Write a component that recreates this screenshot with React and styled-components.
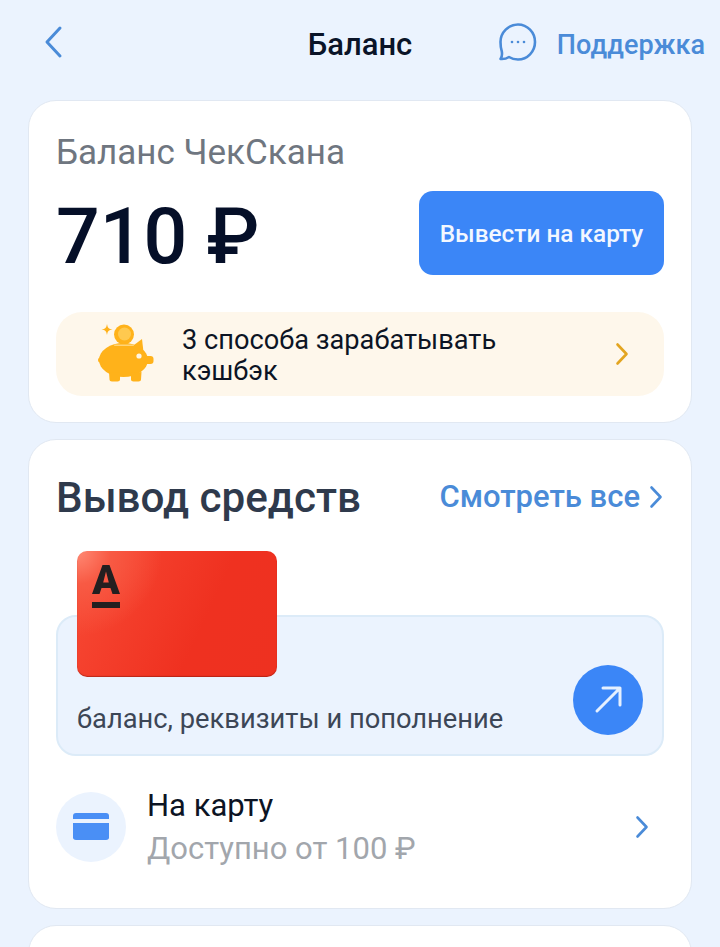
import styled, { createGlobalStyle } from "styled-components";

const GlobalStyle = createGlobalStyle`
  html, body {
    margin: 0;
    padding: 0;
    background: #ebf3fe;
    font-family: "Roboto", "Liberation Sans", sans-serif;
    overflow: hidden;
  }
  * { box-sizing: border-box; }
`;

function BackIcon() {
  return (
    <svg width="20" height="34" viewBox="0 0 20 34" fill="none">
      <path d="M16 3 L3 17 L16 31" stroke="#4a8bd8" strokeWidth="3" strokeLinecap="round" strokeLinejoin="round" />
    </svg>
  );
}

function ChatIcon() {
  return (
    <svg width="40" height="40" viewBox="0 0 40 40" fill="none">
      <path
        d="M20 2.5 C29.5 2.5 37 10.5 37 20 C37 29.5 29.5 37.5 20 37.5 C16.5 37.5 13.5 36.6 11 35 C8.5 36.6 5.5 37.3 2.5 37 C4 35 4.3 32.5 3.8 29.5 C3 27 2.5 23.5 2.5 20 C2.5 10.5 10.5 2.5 20 2.5 Z"
        stroke="#4a8bd8"
        strokeWidth="2.6"
        strokeLinejoin="round"
      />
      <circle cx="14" cy="20" r="1.3" fill="#4a8bd8" />
      <circle cx="20" cy="20" r="1.3" fill="#4a8bd8" />
      <circle cx="26" cy="20" r="1.3" fill="#4a8bd8" />
    </svg>
  );
}

function Chevron({ color }) {
  return (
    <svg width="14" height="24" viewBox="0 0 14 24" fill="none">
      <path d="M2.5 2.5 L11.5 12 L2.5 21.5" stroke={color} strokeWidth="2.6" strokeLinecap="round" strokeLinejoin="round" />
    </svg>
  );
}

function PiggyIcon() {
  return (
    <svg width="56" height="58" viewBox="0 0 56 58" fill="none">
      <path d="M9 0 C9.7 4 10.5 4.8 14.5 5.5 C10.5 6.2 9.7 7 9 11 C8.3 7 7.5 6.2 3.5 5.5 C7.5 4.8 8.3 4 9 0 Z" fill="#ffb21a" />
      <circle cx="26" cy="10.5" r="10" fill="#ffb21a" />
      <circle cx="26.5" cy="10" r="6.5" fill="#ffc94f" />
      <ellipse cx="25.5" cy="36" rx="24.5" ry="17" fill="#ffb21a" />
      <path d="M36 21 L44 15 L45.5 28 Z" fill="#ffb21a" />
      <rect x="46" y="32" width="9.5" height="8" rx="3" fill="#ffb21a" />
      <circle cx="2.5" cy="36" r="2.5" fill="#ffb21a" />
      <path d="M11 48 L22 49 L22 55.5 C22 56.8 21 57.5 19.5 57.5 L14 57.5 C12.5 57.5 11.5 56.8 11.5 55.5 Z" fill="#ffb21a" />
      <path d="M33 49 L43.5 48 L43 55.5 C43 56.8 42 57.5 40.5 57.5 L35.5 57.5 C34 57.5 33 56.8 33 55.5 Z" fill="#ffb21a" />
      <rect x="16" y="20.4" width="20" height="1.6" rx="0.8" fill="#ffd478" />
      <circle cx="41" cy="32" r="2.6" fill="#fff6e4" />
    </svg>
  );
}

function AlfaLogo() {
  return (
    <CardLogo viewBox="0 0 28 43" fill="none">
      <path
        d="M10.5 0 L17.5 0 L28 29 L20.5 29 L18.5 23 L9.5 23 L7.5 29 L0 29 Z M14 6.5 L11.2 17.5 L16.8 17.5 Z"
        fill="#231f20"
        fillRule="evenodd"
      />
      <rect x="0" y="37" width="28" height="6" fill="#231f20" />
    </CardLogo>
  );
}

function ArrowIcon() {
  return (
    <svg width="30" height="30" viewBox="0 0 30 30" fill="none">
      <path d="M4 26 L27 3 M10 3 L27 3 L27 20" stroke="#e5f0ff" strokeWidth="3" strokeLinecap="round" strokeLinejoin="round" />
    </svg>
  );
}

function BankCardIcon() {
  return (
    <svg width="36" height="27" viewBox="0 0 36 27" fill="none">
      <path d="M0 6 L0 3 C0 1 1 0 3 0 L33 0 C35 0 36 1 36 3 L36 6 Z" fill="#4a8ff5" />
      <path d="M0 10 L36 10 L36 24.5 C36 26 35 27 33 27 L3 27 C1 27 0 26 0 24.5 Z" fill="#4a8ff5" />
    </svg>
  );
}

export default function App() {
  return (
    <>
      <GlobalStyle />
      <Page>
        <Header>
          <BackButton>
            <BackIcon />
          </BackButton>
          <HeaderTitle>Баланс</HeaderTitle>
          <Support>
            <ChatIcon />
            <SupportText>Поддержка</SupportText>
          </Support>
        </Header>

        <BalanceCard>
          <BalanceLabel>Баланс ЧекСкана</BalanceLabel>
          <BalanceRow>
            <Amount>710 ₽</Amount>
            <WithdrawButton>Вывести на карту</WithdrawButton>
          </BalanceRow>
          <Promo>
            <PromoIcon>
              <PiggyIcon />
            </PromoIcon>
            <PromoText>3 способа зарабатывать кэшбэк</PromoText>
            <Chevron color="#e3a520" />
          </Promo>
        </BalanceCard>

        <WithdrawCard>
          <SectionHead>
            <SectionTitle>Вывод средств</SectionTitle>
            <SeeAll>
              Смотреть все
              <Chevron color="#4a8bd8" />
            </SeeAll>
          </SectionHead>
          <Panel>
            <RedCard>
              <AlfaLogo />
            </RedCard>
            <PanelText>баланс, реквизиты и пополнение</PanelText>
            <RoundButton>
              <ArrowIcon />
            </RoundButton>
          </Panel>
          <MethodRow>
            <MethodIcon>
              <BankCardIcon />
            </MethodIcon>
            <MethodBody>
              <MethodName>На карту</MethodName>
              <MethodHint>Доступно от 100 ₽</MethodHint>
            </MethodBody>
            <Chevron color="#4a8bd8" />
          </MethodRow>
        </WithdrawCard>

        <NextCard />
      </Page>
    </>
  );
}

const Page = styled.div`
  width: 720px;
  height: 947px;
  padding: 0 28px;
  overflow: hidden;
  display: flex;
  flex-direction: column;
  gap: 16px;
  background: #ebf3fe;
`;

const Header = styled.div`
  flex-shrink: 0;
  height: 84px;
  margin: 0 -13px;
  display: grid;
  grid-template-columns: 1fr auto 1fr;
  align-items: center;
`;

const BackButton = styled.div`
  width: 20px;
  height: 34px;
  margin-left: 29px;
`;

const HeaderTitle = styled.div`
  font-size: 31px;
  font-weight: 500;
  padding-top: 4px;
  color: #0a1428;
`;

const Support = styled.div`
  display: flex;
  align-items: center;
  justify-content: flex-end;
  gap: 19px;
`;

const SupportText = styled.div`
  padding-top: 5px;
  font-size: 27px;
  font-weight: 500;
  white-space: nowrap;
  color: #4a8bd8;
`;

const Card = styled.div`
  flex-shrink: 0;
  padding: 0 27px;
  background: #fff;
  border: 1px solid #e1e8f2;
  border-radius: 28px;
  display: flex;
  flex-direction: column;
`;

const BalanceCard = styled(Card)`
  height: 323px;
  padding-top: 31px;
  padding-bottom: 26px;
`;

const BalanceLabel = styled.div`
  font-size: 35px;
  line-height: 42px;
  color: #6f7680;
`;

const BalanceRow = styled.div`
  margin-top: 17px;
  display: flex;
  align-items: center;
  justify-content: space-between;
`;

const Amount = styled.div`
  height: 84px;
  font-size: 77px;
  line-height: 92px;
  font-weight: 500;
  color: #050f28;
`;

const WithdrawButton = styled.div`
  width: 245px;
  height: 84px;
  border-radius: 14px;
  background: #3b86f7;
  color: #f2f7ff;
  font-size: 24.4px;
  font-weight: 500;
  display: flex;
  align-items: center;
  justify-content: center;
`;

const Promo = styled.div`
  margin-top: auto;
  height: 84px;
  padding: 0 35px 0 42px;
  border-radius: 26px;
  background: #fef7eb;
  display: flex;
  align-items: center;
  justify-content: space-between;
`;

const PromoIcon = styled.div`
  width: 56px;
  height: 58px;
  margin-top: -2px;
  flex-shrink: 0;
`;

const PromoText = styled.div`
  width: 380px;
  margin: 3px auto 0 28px;
  font-size: 27.2px;
  line-height: 31px;
  color: #0c1424;
`;

const WithdrawCard = styled(Card)`
  height: 470px;
`;

const SectionHead = styled.div`
  height: 111px;
  display: flex;
  align-items: center;
  justify-content: space-between;
`;

const SectionTitle = styled.div`
  padding-top: 3px;
  font-size: 42.2px;
  font-weight: 500;
  color: #2f3a4c;
`;

const SeeAll = styled.div`
  display: flex;
  align-items: center;
  gap: 9px;
  padding: 2px 1px 0 0;
  font-size: 31px;
  font-weight: 500;
  color: #4a8bd8;
`;

const Panel = styled.div`
  position: relative;
  margin-top: 64px;
  height: 141px;
  border: 2px solid #dcebf8;
  border-radius: 20px;
  background: #ebf3fe;
  padding: 0 19px;
  display: flex;
  align-items: flex-end;
`;

const RedCard = styled.div`
  position: absolute;
  left: 19px;
  top: -66px;
  width: 200px;
  height: 126px;
  padding: 14px 15px;
  border-radius: 10px;
  background: radial-gradient(circle at 0 0, #ff8a75 0, #f85a44 14%, transparent 36%),
    linear-gradient(115deg, #f84a35 0, #ef3120 62%, #ee3120 100%);
  box-shadow: inset 0 -1px 1px rgba(130, 20, 10, 0.5);
`;

const CardLogo = styled.svg`
  display: block;
  width: 28px;
  height: 43px;
`;

const PanelText = styled.div`
  padding-bottom: 19px;
  font-size: 27.3px;
  line-height: 32px;
  color: #3c4656;
`;

const RoundButton = styled.div`
  position: absolute;
  right: 19px;
  top: 48px;
  width: 70px;
  height: 70px;
  border-radius: 50%;
  background: #3b86f7;
  display: flex;
  align-items: center;
  justify-content: center;
`;

const MethodRow = styled.div`
  margin-top: 29px;
  padding-right: 15px;
  display: flex;
  align-items: center;
`;

const MethodIcon = styled.div`
  width: 70px;
  height: 70px;
  border-radius: 50%;
  background: #ebf3fe;
  display: flex;
  align-items: center;
  justify-content: center;
  flex-shrink: 0;
`;

const MethodBody = styled.div`
  flex: 1;
  margin-left: 21px;
  padding-top: 2px;
`;

const MethodName = styled.div`
  font-size: 31px;
  line-height: 38px;
  color: #0c1424;
`;

const MethodHint = styled.div`
  margin-top: 5px;
  font-size: 31px;
  line-height: 38px;
  color: #a2a6ac;
`;

const NextCard = styled.div`
  flex-shrink: 0;
  height: 120px;
  background: #fff;
  border: 1px solid #e1e8f2;
  border-radius: 28px;
`;
